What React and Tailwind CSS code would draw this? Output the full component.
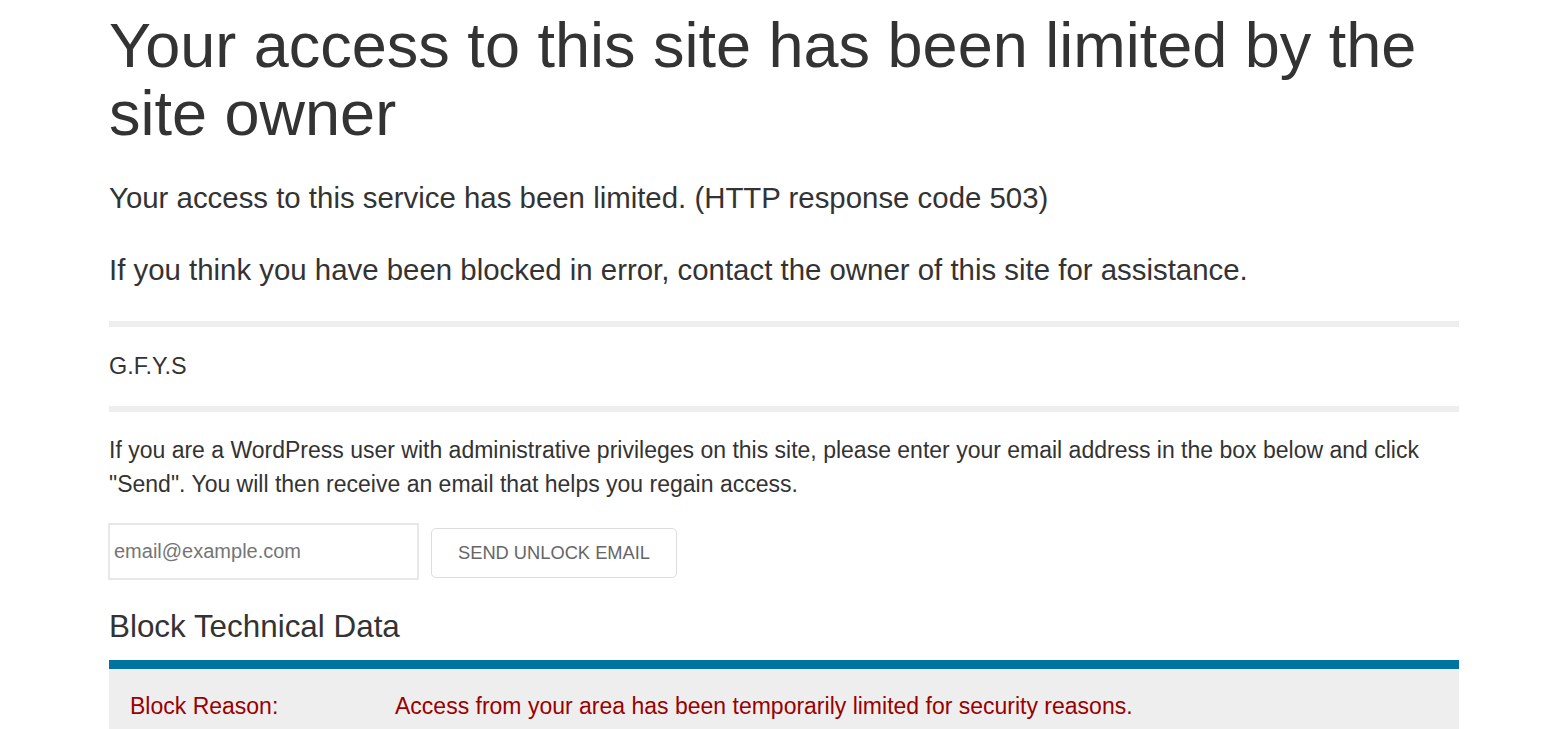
export default function App() {
  const rows = [
    ["Block Reason:", "Access from your area has been temporarily limited for security reasons."],
  ];

  return (
    <div className="h-screen overflow-hidden bg-white text-[#333] font-['Liberation_Sans',Arial,sans-serif]">
      <div className="ml-[109px] w-[1350px]">
        <h1 className="mt-[12px] text-[63px] leading-[67.5px] font-normal">
          Your access to this site has been limited by the site owner
        </h1>
        <p className="mt-[29px] text-[29.4px] leading-[44px]">
          Your access to this service has been limited. (HTTP response code 503)
        </p>
        <p className="mt-[28px] text-[29.4px] leading-[44px]">
          If you think you have been blocked in error, contact the owner of this site for assistance.
        </p>

        <div className="mt-[29px] h-[6px] bg-[#eeeeee]" />
        <div className="mt-[21px] text-[23.4px] leading-[36px]">G.F.Y.S</div>
        <div className="mt-[22px] h-[6px] bg-[#eeeeee]" />

        <p className="mt-[21px] text-[23px] leading-[34px]">
          If you are a WordPress user with administrative privileges on this site, please enter your email address in the box below and click "Send". You will then receive an email that helps you regain access.
        </p>

        <form className="mt-[22px] flex items-start gap-[12px]" onSubmit={(e) => e.preventDefault()}>
          <input
            type="email"
            placeholder="email@example.com"
            className="ml-[-1px] h-[57px] w-[311px] border-2 border-[#e8e8e8] px-[4px] text-[20px] text-[#333] placeholder:text-[#757575] outline-none"
          />
          <button
            type="submit"
            className="mt-[5px] h-[50px] w-[246px] rounded-[5px] border border-[#dddddd] bg-white text-[18.3px] uppercase text-[#666]"
          >
            Send Unlock Email
          </button>
        </form>

        <h2 className="mt-[27.6px] text-[31.4px] leading-[37.2px] font-normal">Block Technical Data</h2>

        <div className="mt-[15px] h-[9px] bg-[#0073a0]" />
        <div className="bg-[#eeeeee] pt-[19px] pb-[16px]">
          {rows.map(([label, value]) => (
            <div key={label} className="flex text-[23px] leading-[36px] text-[#990000]">
              <div className="w-[286px] shrink-0 pl-[21px]">{label}</div>
              <div>{value}</div>
            </div>
          ))}
        </div>
      </div>
    </div>
  );
}
